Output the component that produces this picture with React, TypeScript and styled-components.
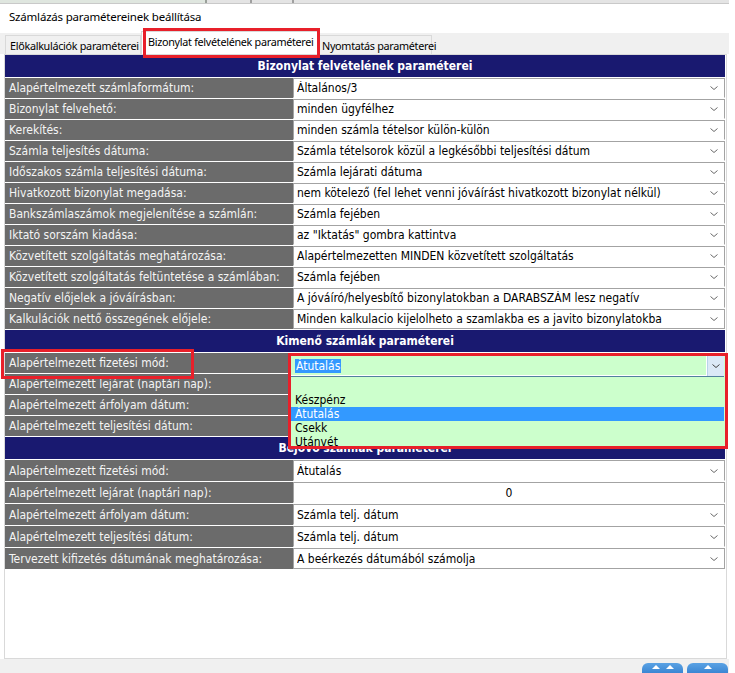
import React from "react";
import styled, { createGlobalStyle } from "styled-components";

const Global = createGlobalStyle`
  html, body { margin: 0; padding: 0; background: #ffffff; }
  #root { width: 735px; height: 673px; }
`;

const UIFONT = `"DejaVu Sans Condensed", "DejaVu Sans", sans-serif`;
const WINFONT = `"Noto Sans", "Open Sans", sans-serif`;
const RED = "#e8202a";

const Page = styled.div`
  width: 735px;
  height: 673px;
  overflow: hidden;
  background: #ffffff;
`;

const Frame = styled.div`
  width: 729px;
  height: 673px;
  display: flex;
  flex-direction: column;
  background: #ffffff;
`;

const TopStrip = styled.div`
  height: 3px;
  flex: none;
  background: linear-gradient(90deg, #dfe6df 0 205px, #9aa09a 205px 207px, #e4e4e4 207px 250px, #a0a0a0 250px 252px, #e4e4e4 252px 292px, #a0a0a0 292px 294px, #e4e4e4 294px);
  border-bottom: 1px solid #c9c9c9;
`;

const TitleBar = styled.div`
  height: 29px;
  flex: none;
  padding: 5px 0 0 9px;
  box-sizing: border-box;
  font-family: ${WINFONT};
  font-size: 11.5px;
  letter-spacing: -0.2px;
  color: #000;
`;

const TabStrip = styled.div`
  height: 21px;
  flex: none;
  display: flex;
  align-items: flex-end;
  padding-left: 5px;
  background: #f0f0f0;
`;

const Tab = styled.div<{ $w: number; $active?: boolean }>`
  position: relative;
  width: ${(p) => p.$w}px;
  height: ${(p) => (p.$active ? 23 : 19)}px;
  margin-right: ${(p) => (p.$active ? "-1px" : "0")};
  z-index: ${(p) => (p.$active ? 2 : 1)};
  box-sizing: border-box;
  border: 1px solid #d9d9d9;
  border-bottom: none;
  background: ${(p) => (p.$active ? "#ffffff" : "#f0f0f0")};
  font-family: ${WINFONT};
  font-size: 10.8px;
  letter-spacing: -0.3px;
  line-height: 17px;
  padding-left: ${(p) => (p.$active ? 6 : 4)}px;
  padding-top: ${(p) => (p.$active ? 1 : 1)}px;
  white-space: nowrap;
  color: #000;
`;

const Callout = styled.div<{ $l: number; $t: number; $w: number; $h: number }>`
  position: absolute;
  left: ${(p) => p.$l}px;
  top: ${(p) => p.$t}px;
  width: ${(p) => p.$w}px;
  height: ${(p) => p.$h}px;
  box-sizing: border-box;
  border: 3px solid ${RED};
  pointer-events: none;
  z-index: 5;
`;

const Panel = styled.div`
  margin-left: 4px;
  width: 723px;
  height: 605px;
  flex: none;
  box-sizing: border-box;
  border: 1px solid #d9d9d9;
  background: #ffffff;
  display: flex;
  flex-direction: column;
  gap: 1px;
  padding-right: 1px;
`;

const SectionHeader = styled.div<{ $h: number }>`
  height: ${(p) => p.$h}px;
  flex: none;
  background: #191970;
  color: #ffffff;
  font-family: ${UIFONT};
  font-weight: bold;
  font-size: 12px;
  display: flex;
  align-items: center;
  justify-content: center;
`;

const Row = styled.div<{ $h: number }>`
  height: ${(p) => p.$h}px;
  flex: none;
  display: grid;
  grid-template-columns: 288px 1fr;
  font-family: ${UIFONT};
  font-size: 12px;
`;

const Label = styled.div`
  position: relative;
  background: #6b6b6b;
  color: #f4f4f4;
  padding-left: 4px;
  display: flex;
  align-items: center;
  white-space: nowrap;
  overflow: visible;
`;

const Value = styled.div<{ $last?: boolean; $center?: boolean }>`
  position: relative;
  background: #ffffff;
  color: #000000;
  border: 1px solid #a3a3a3;
  border-bottom-color: ${(p) => (p.$last ? "#a3a3a3" : "transparent")};
  box-sizing: border-box;
  display: flex;
  align-items: center;
  padding-left: 3px;
  white-space: nowrap;
  justify-content: ${(p) => (p.$center ? "center" : "flex-start")};
`;

const ValueText = styled.span`
  flex: 1;
  overflow: hidden;
`;

const CenterText = styled.span`
  padding-right: 3px;
`;

const ChevronBox = styled.span`
  width: 8px;
  height: 6px;
  margin-right: 6px;
  display: flex;
`;

const Chevron = () => (
  <ChevronBox>
    <svg width="8" height="6" viewBox="0 0 8 6">
      <polyline points="0.5,1.5 4,4.5 7.5,1.5" fill="none" stroke="#6a6a6a" strokeWidth="1" />
    </svg>
  </ChevronBox>
);

/* open combobox */
const DropBox = styled.div`
  position: absolute;
  left: -6px;
  top: -1px;
  right: -4px;
  height: 96px;
  box-sizing: border-box;
  border: 3px solid ${RED};
  background: #ccffcc;
  z-index: 4;
  overflow: hidden;
  display: flex;
  flex-direction: column;
`;

const ComboLine = styled.div`
  height: 20px;
  flex: none;
  display: flex;
`;

const ComboText = styled.div`
  flex: 1;
  border-right: 1px solid #ffffff;
  border-bottom: 1px solid #ffffff;
  display: flex;
  align-items: center;
  padding-left: 4px;
`;

const Selected = styled.span`
  background: #3399ff;
  color: #ffffff;
  line-height: 14px;
  padding: 0 1px;
`;

const ComboButton = styled.div`
  width: 16px;
  margin-right: 1px;
  background: #dbe9f7;
  border-left: 1px solid #b9d3ea;
  display: flex;
  align-items: center;
  justify-content: center;
`;

const ListDivider = styled.div`
  height: 1px;
  flex: none;
  background: #52809f;
  margin-right: 1px;
`;

const ListItem = styled.div<{ $sel?: boolean; $h?: number }>`
  height: ${(p) => p.$h ?? 14}px;
  flex: none;
  line-height: 14px;
  padding-left: 4px;
  margin-right: 1px;
  background: ${(p) => (p.$sel ? "#3399ff" : "transparent")};
  color: ${(p) => (p.$sel ? "#ffffff" : "#000000")};
`;

const Footer = styled.div`
  height: 14px;
  flex: none;
  background: #f0f0f0;
  border-bottom: 1px solid #1e1e1e;
  display: flex;
  justify-content: flex-end;
  align-items: flex-end;
  gap: 4px;
  padding-right: 1px;
`;

const NavButton = styled.div`
  width: 41px;
  height: 10px;
  border-radius: 6px 6px 0 0;
  background: linear-gradient(#5aa2e4, #3b86d3);
  display: flex;
  justify-content: center;
  align-items: flex-start;
  gap: 6px;
  padding-top: 2px;
  box-sizing: border-box;
`;

const Arrow = styled.span`
  width: 0;
  height: 0;
  border-left: 4px solid transparent;
  border-right: 4px solid transparent;
  border-bottom: 4px solid #ffffff;
`;

type Item = { label: string; value: string; kind?: "select" | "center" | "open" };

const first: Item[] = [
  { label: "Alapértelmezett számlaformátum:", value: "Általános/3" },
  { label: "Bizonylat felvehető:", value: "minden ügyfélhez" },
  { label: "Kerekítés:", value: "minden számla tételsor külön-külön" },
  { label: "Számla teljesítés dátuma:", value: "Számla tételsorok közül a legkésőbbi teljesítési dátum" },
  { label: "Időszakos számla teljesítési dátuma:", value: "Számla lejárati dátuma" },
  { label: "Hivatkozott bizonylat megadása:", value: "nem kötelező (fel lehet venni jóváírást hivatkozott bizonylat nélkül)" },
  { label: "Bankszámlaszámok megjelenítése a számlán:", value: "Számla fejében" },
  { label: "Iktató sorszám kiadása:", value: "az \"Iktatás\" gombra kattintva" },
  { label: "Közvetített szolgáltatás meghatározása:", value: "Alapértelmezetten MINDEN közvetített szolgáltatás" },
  { label: "Közvetített szolgáltatás feltüntetése a számlában:", value: "Számla fejében" },
  { label: "Negatív előjelek a jóváírásban:", value: "A jóváíró/helyesbítő bizonylatokban a DARABSZÁM lesz negatív" },
  { label: "Kalkulációk nettő összegének előjele:", value: "Minden kalkulacio kijelolheto a szamlakba es a javito bizonylatokba" },
];

const outgoing: Item[] = [
  { label: "Alapértelmezett fizetési mód:", value: "Átutalás", kind: "open" },
  { label: "Alapértelmezett lejárat (naptári nap):", value: "0", kind: "center" },
  { label: "Alapértelmezett árfolyam dátum:", value: "Számla telj. dátum" },
  { label: "Alapértelmezett teljesítési dátum:", value: "Számla telj. dátum" },
];

const incoming: Item[] = [
  { label: "Alapértelmezett fizetési mód:", value: "Átutalás" },
  { label: "Alapértelmezett lejárat (naptári nap):", value: "0", kind: "center" },
  { label: "Alapértelmezett árfolyam dátum:", value: "Számla telj. dátum" },
  { label: "Alapértelmezett teljesítési dátum:", value: "Számla telj. dátum" },
  { label: "Tervezett kifizetés dátumának meghatározása:", value: "A beérkezés dátumából számolja" },
];

const OpenCombo = () => (
  <DropBox>
    <ComboLine>
      <ComboText>
        <Selected>Átutalás</Selected>
      </ComboText>
      <ComboButton>
        <svg width="8" height="6" viewBox="0 0 8 6">
          <polyline points="0.5,1.5 4,4.5 7.5,1.5" fill="none" stroke="#404040" strokeWidth="1" />
        </svg>
      </ComboButton>
    </ComboLine>
    <ListDivider />
    <ListItem $h={16}>&nbsp;</ListItem>
    <ListItem>Készpénz</ListItem>
    <ListItem $sel>Átutalás</ListItem>
    <ListItem>Csekk</ListItem>
    <ListItem>Utánvét</ListItem>
  </DropBox>
);

const ParamRow = ({ item, h, last, mark }: { item: Item; h: number; last: boolean; mark?: boolean }) => (
  <Row $h={h}>
    <Label>
      {item.label}
      {mark && <Callout $l={-4} $t={-4} $w={193} $h={30} />}
    </Label>
    {item.kind === "center" ? (
      <Value $last={last} $center>
        <CenterText>{item.value}</CenterText>
      </Value>
    ) : item.kind === "open" ? (
      <Value $last={last}>
        <ValueText>{item.value}</ValueText>
        <OpenCombo />
      </Value>
    ) : (
      <Value $last={last}>
        <ValueText>{item.value}</ValueText>
        <Chevron />
      </Value>
    )}
  </Row>
);

const Section = ({ title, items, h, headH, markFirst }: { title: string; items: Item[]; h: number; headH: number; markFirst?: boolean }) => (
  <>
    <SectionHeader $h={headH}>{title}</SectionHeader>
    {items.map((it, i) => (
      <ParamRow key={i} item={it} h={h} last={i === items.length - 1} mark={markFirst && i === 0} />
    ))}
  </>
);

export default function App() {
  return (
    <Page>
      <Global />
      <Frame>
        <TopStrip />
        <TitleBar>Számlázás paramétereinek beállítása</TitleBar>
        <TabStrip>
          <Tab $w={136}>Előkalkulációk paraméterei</Tab>
          <Tab $w={177} $active>
            Bizonylat felvételének paraméterei
            <Callout $l={1} $t={-4} $w={177} $h={30} />
          </Tab>
          <Tab $w={115}>Nyomtatás paraméterei</Tab>
        </TabStrip>
        <Panel>
          <Section title="Bizonylat felvételének paraméterei" items={first} h={20} headH={22} />
          <Section title="Kimenő számlák paraméterei" items={outgoing} h={20} headH={22} markFirst />
          <Section title="Bejövő számlák paraméterei" items={incoming} h={21} headH={22} />
        </Panel>
        <Footer>
          <NavButton>
            <Arrow />
            <Arrow />
          </NavButton>
          <NavButton>
            <Arrow />
          </NavButton>
        </Footer>
      </Frame>
    </Page>
  );
}
